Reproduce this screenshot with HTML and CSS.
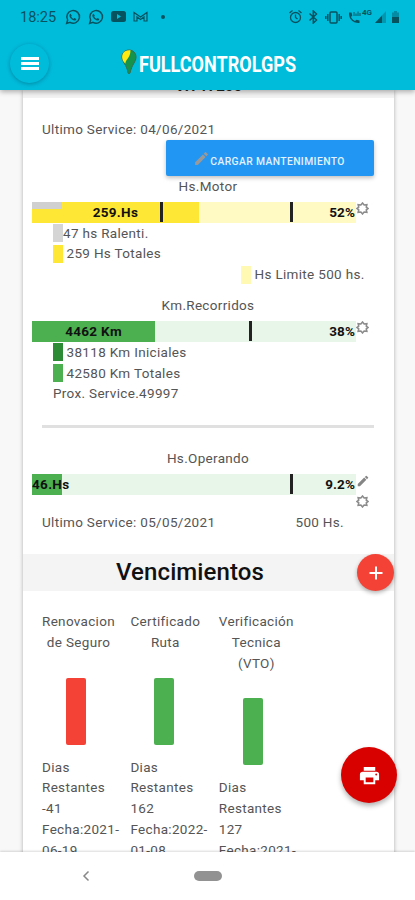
FILE: index.html
```html
<!DOCTYPE html>
<html lang="es">
<head>
  <meta charset="UTF-8">
  <meta name="viewport" content="width=device-width, initial-scale=1.0">
  <title>FULLCONTROLGPS</title>
  <link rel="stylesheet" href="styles.css">
</head>
<body>
  <!-- Shared icons -->
  <svg class="defs">
    <symbol id="gear" viewBox="0 0 24 24">
      <path d="M12 2l3 3.500 5-.5-1 4.500 3 2.500-3 2.500 1 4.500-5-.5-3 3.500-3-3.500-5 .5 1-4.500L2 12l3-2.500L4 5l5 .5z" fill="none" stroke="#8c8c8c" stroke-width="3"/>
      <circle cx="12" cy="12" r="3.500" fill="#fff"/>
    </symbol>
    <symbol id="pencil" viewBox="0 0 24 24">
      <path d="M3 17.250V21h3.750L17.810 9.940l-3.750-3.750zM20.710 7.040a1 1 0 0 0 0-1.410l-2.340-2.340a1 1 0 0 0-1.410 0l-1.830 1.830 3.750 3.750z"/>
    </symbol>
    <symbol id="whatsapp" viewBox="0 0 24 24">
      <path d="M2.500 21.500l1.500-5A9.500 9.500 0 1 1 7.500 20z" fill="none" stroke="currentColor" stroke-width="2.200"/>
      <path d="M8.500 7l1.700 3-1 1.300c1 1.800 2 2.700 3.800 3.500l1.200-1.300 2.800 1.500c-.5 2.500-2.500 2.700-4.500 1.800-3-1.300-5-3.500-5.800-6C6.300 9 7 7.500 8.500 7z" fill="currentColor"/>
    </symbol>
  </svg>

  <header class="header">
    <div class="status-bar">
      <div class="status-left">
        <span class="clock">18:25</span>
        <svg width="16" height="16"><use href="#whatsapp"/></svg>
        <svg width="16" height="16"><use href="#whatsapp"/></svg>
        <svg width="15" height="11" viewBox="0 0 15 11"><rect width="15" height="11" rx="2.500" fill="currentColor"/><path d="M6 3l4 2.500L6 8z" fill="#00bcdb"/></svg>
        <svg width="15" height="11" viewBox="0 0 15 11"><path d="M1 10V1.500L7.500 6 14 1.500V10h-3V6L7.500 8.500 4 6v4z" fill="none" stroke="currentColor" stroke-width="1.200"/></svg>
        <span class="dot"></span>
      </div>
      <div class="status-right">
        <svg width="13" height="14" viewBox="0 0 13 14" fill="none" stroke="currentColor" stroke-width="1.300"><circle cx="6.500" cy="7.500" r="5"/><path d="M6.500 4.500v3l2 1.500M.5 3l3-2.500M12.500 3l-3-2.500"/></svg>
        <svg class="bluetooth" width="9" height="14" viewBox="0 0 9 14" fill="none" stroke="currentColor" stroke-width="1.500"><path d="M.5 3.500l7 6.500-3.200 3V1l3.200 3-7 6.500"/></svg>
        <svg width="17" height="13" viewBox="0 0 17 13" fill="none" stroke="currentColor" stroke-width="1.500"><rect x="5" y="1" width="7" height="11" rx="1"/><path d="M2.800 3v7M14.200 3v7M.8 5v3M16.200 5v3"/></svg>
        <svg width="13" height="14" viewBox="0 0 13 14"><path d="M1 2.500h2.500l.8 3L3 7c.9 2 2.200 3.200 4 4l1.500-1.300 3 .8V13C5 13.500.5 9 1 2.500z" fill="currentColor"/><path d="M6 6V2M8 6V3.500M10 6V1.500M12 6V3" stroke="currentColor"/></svg>
        <span class="network">4G</span>
        <svg width="11" height="12" viewBox="0 0 11 12"><path d="M11 0v12H0z" fill="currentColor" opacity=".35"/><path d="M7 4.400V12H0z" fill="currentColor"/></svg>
        <svg class="battery" width="7" height="12" viewBox="0 0 7 12"><path d="M2 0h3v1.500h2V6H0V1.500h2z" fill="currentColor" opacity=".45"/><path d="M0 6h7v6H0z" fill="currentColor"/></svg>
      </div>
    </div>
    <div class="app-bar">
      <button class="menu-btn" aria-label="Menu"><span></span><span></span><span></span></button>
      <div class="brand">
        <svg width="16" height="25" viewBox="0 0 16 25"><path d="M8 1c4 0 7 3 7 7 0 5-4 7-6 16-.4 1-1.600 1-2 0C6 16 1 13 1 8c0-4 3-7 7-7z" fill="#16934b" stroke="#376d50"/><path d="M9.500 1.200C3 .5.500 5 1.300 9.500 1.800 12 3 13.500 4.500 14.500 4 11 9.500 9 9.500 1.200z" fill="#ffeb12"/></svg>
        <span class="brand-name">FULLCONTROLGPS</span>
      </div>
    </div>
  </header>

  <main class="content">
    <div class="card">
      <div class="vehicle">VH 17200</div>

      <!-- Hs.Motor -->
      <section class="service motor">
        <p class="line">Ultimo Service: 04/06/2021</p>
        <button class="load-btn"><svg width="17" height="17" fill="#999"><use href="#pencil"/></svg>CARGAR MANTENIMIENTO</button>
        <p class="metric">Hs.Motor</p>
        <div class="bar-row">
          <div class="bar yellow">
            <div class="fill" style="width: 51.5%">259.Hs</div>
            <span class="idle"></span>
            <span class="mark" style="left: 39.5%"></span>
            <span class="mark" style="left: 79.5%"></span>
            <span class="percent">52%</span>
          </div>
          <svg class="tool" width="13" height="13"><use href="#gear"/></svg>
        </div>
        <ul class="legend">
          <li class="tight"><i class="swatch gray"></i>47 hs Ralenti.</li>
          <li><i class="swatch yellow-dark"></i>259 Hs Totales</li>
          <li class="limit"><i class="swatch yellow-light"></i>Hs Limite 500 hs.</li>
        </ul>
      </section>

      <!-- Km.Recorridos -->
      <section class="service km">
        <p class="metric">Km.Recorridos</p>
        <div class="bar-row">
          <div class="bar green">
            <div class="fill" style="width: 38%">4462 Km</div>
            <span class="mark" style="left: 67%"></span>
            <span class="percent">38%</span>
          </div>
          <svg class="tool" width="13" height="13"><use href="#gear"/></svg>
        </div>
        <ul class="legend">
          <li><i class="swatch green-dark"></i>38118 Km Iniciales</li>
          <li><i class="swatch green-mid"></i>42580 Km Totales</li>
          <li>Prox. Service.49997</li>
        </ul>
      </section>

      <hr class="divider">

      <!-- Hs.Operando -->
      <section class="service operando">
        <p class="metric">Hs.Operando</p>
        <div class="bar-row">
          <div class="bar green">
            <div class="fill start" style="width: 9.2%">46.Hs</div>
            <span class="mark" style="left: 79.5%"></span>
            <span class="percent">9.2%</span>
          </div>
          <div class="tools">
            <svg width="14" height="14" fill="#858585"><use href="#pencil"/></svg>
            <svg width="13" height="13"><use href="#gear"/></svg>
          </div>
        </div>
        <p class="line split"><span>Ultimo Service: 05/05/2021</span><span>500 Hs.</span></p>
      </section>

      <!-- Vencimientos -->
      <div class="due-header">
        <h2>Vencimientos</h2>
        <button class="add-btn" aria-label="Agregar"><svg width="16" height="16" viewBox="0 0 16 16"><path d="M8 1.500v13M1.500 8h13" stroke="#fff" stroke-width="2"/></svg></button>
      </div>
      <div class="due-list">
        <div class="due">
          <h3>Renovacion<br>de Seguro</h3>
          <div class="due-bar expired"></div>
          <p>Dias<br>Restantes<br>-41<br>Fecha:2021-<br>06-19</p>
        </div>
        <div class="due">
          <h3>Certificado<br>Ruta</h3>
          <div class="due-bar"></div>
          <p>Dias<br>Restantes<br>162<br>Fecha:2022-<br>01-08</p>
        </div>
        <div class="due">
          <h3>Verificación<br>Tecnica<br>(VTO)</h3>
          <div class="due-bar"></div>
          <p>Dias<br>Restantes<br>127<br>Fecha:2021-</p>
        </div>
      </div>
    </div>
    <button class="print-btn" aria-label="Imprimir">
      <svg width="23" height="23" viewBox="0 0 24 24"><path d="M19 8H5a3 3 0 0 0-3 3v6h4v4h12v-4h4v-6a3 3 0 0 0-3-3zm-3 11H8v-5h8zm3-7a1 1 0 1 1 0-2 1 1 0 0 1 0 2zM18 3H6v4h12z" fill="#fff"/></svg>
    </button>
  </main>

  <nav class="nav-bar">
    <svg width="8" height="12" viewBox="0 0 8 12"><path d="M6.500 1.500L2 6l4.500 4.500" fill="none" stroke="#888" stroke-width="1.500"/></svg>
    <span class="home-pill"></span>
  </nav>
</body>
</html>
```
FILE: styles.css
```css
* {
  box-sizing: border-box;
}
body {
  margin: 0;
  height: 900px;
  display: flex;
  flex-direction: column;
  overflow: hidden;
  background-color: #f8f8f8;
  color: #555;
  font-family: Roboto, sans-serif;
  font-size: 13.5px;
  line-height: 20.8px;
  letter-spacing: 0.32px;
}
p, h2, h3, ul {
  margin: 0;
  padding: 0;
  font-weight: 400;
}
button {
  border: none;
  padding: 0;
  font-family: inherit;
  display: flex;
  align-items: center;
  justify-content: center;
}
svg {
  display: block;
  flex-shrink: 0;
}
.defs {
  display: none;
}

/* Header */
.header {
  height: 90px;
  flex-shrink: 0;
  background-color: #00bcdb;
  box-shadow: 0 2px 5px rgba(0, 0, 0, 0.3);
  z-index: 2;
}
.status-bar {
  height: 34px;
  padding: 0 16px 0 20px;
  display: flex;
  justify-content: space-between;
  align-items: center;
  color: #07525f;
}
.status-left, .status-right {
  display: flex;
  align-items: center;
}
.status-left {
  gap: 7px;
}
.clock {
  width: 38px;
  font-size: 14.5px;
  letter-spacing: 0;
  padding-top: 2px;
}
.dot {
  width: 4px;
  height: 4px;
  margin-left: 6px;
  border-radius: 50%;
  background-color: #07525f;
}
.status-right {
  gap: 6px;
}
.bluetooth {
  margin: 0 1px;
}
.network {
  margin: -7px -3px 0 -5px;
  font-size: 8px;
  font-weight: 700;
  letter-spacing: 0;
}
.app-bar {
  height: 56px;
  padding: 0 10px;
  display: flex;
  align-items: center;
}
.menu-btn {
  width: 39px;
  height: 39px;
  border-radius: 50%;
  flex-direction: column;
  gap: 2px;
  margin-top: 2px;
  background-color: #00bcdb;
  box-shadow: 0 1px 4px rgba(0, 60, 80, 0.4);
}
.menu-btn span {
  width: 18px;
  height: 3px;
  background-color: #fff;
}
.brand {
  display: flex;
  align-items: center;
  margin-left: 72px;
}
.brand-name {
  width: 158px;
  margin: 7px 0 0 2px;
  color: #fff;
  font-size: 21.5px;
  font-weight: 700;
  letter-spacing: 0;
  transform: scaleX(0.84);
  transform-origin: left;
}

/* Card */
.content {
  flex: 1;
  min-height: 0;
  overflow: hidden;
  position: relative;
}
.card {
  width: 371px;
  height: 800px;
  margin-left: 23px;
  background-color: #fff;
  box-shadow: 0 0 4px rgba(0, 0, 0, 0.3);
}
.vehicle {
  height: 8px;
  display: flex;
  justify-content: center;
  align-items: flex-end;
  background-color: #f3f3f3;
  color: #222;
  font-size: 15px;
  font-weight: 700;
  letter-spacing: 0;
  line-height: 19px;
  padding-bottom: 2px;
}
.service {
  padding: 0 20px 0 9px;
}
.motor {
  height: 197px;
  padding-top: 21px;
}
.line {
  padding-left: 10px;
}
.load-btn {
  width: 208px;
  height: 36px;
  margin-left: auto;
  padding: 2px 2px 0 0;
  border-radius: 2px;
  background-color: #2196f3;
  color: #e3f2ff;
  font-size: 10.3px;
  font-weight: 500;
  letter-spacing: 0.4px;
  box-shadow: 0 2px 4px rgba(0, 0, 0, 0.25);
}
.load-btn {
  padding-top: 7px;
}
.load-btn svg {
  margin-top: -5px;
}
.metric {
  padding-left: 10px;
  text-align: center;
}
.bar-row {
  display: flex;
  margin-top: 5px;
}
.bar {
  width: 324px;
  height: 21px;
  position: relative;
  display: flex;
  align-items: center;
  flex-shrink: 0;
  color: #111;
  font-weight: 700;
  line-height: 21px;
}
.yellow {
  background-color: #fff9c4;
}
.green {
  background-color: #e8f5e9;
}
.fill {
  height: 21px;
  text-align: center;
  white-space: nowrap;
}
.fill.start {
  text-align: left;
}
.yellow .fill {
  background-color: #ffe735;
}
.green .fill {
  background-color: #4caf50;
}
.idle {
  position: absolute;
  left: 0;
  top: 0;
  width: 30px;
  height: 7px;
  background-color: #d0d0d0;
}
.mark {
  position: absolute;
  top: 0;
  width: 3px;
  height: 20px;
  background-color: #222;
}
.percent {
  margin-left: auto;
  margin-right: 1px;
  font-size: 13.5px;
  letter-spacing: 0.1px;
}
.legend {
  padding-left: 21px;
  list-style: none;
}
.legend li {
  display: flex;
  align-items: center;
  gap: 3.5px;
}
.legend .tight {
  gap: 0;
}
.legend .limit {
  margin-left: 188px;
}
.swatch {
  width: 10px;
  height: 18px;
}
.gray {
  background-color: #d5d5d5;
}
.yellow-dark {
  background-color: #ffe735;
}
.yellow-light {
  background-color: #fff9b4;
}
.green-dark {
  background-color: #2e8b35;
}
.green-mid {
  background-color: #4caf50;
}
.km {
  height: 130px;
}
.divider {
  height: 3px;
  margin: 0 20px 0 19px;
  border: none;
  background-color: #e0e0e0;
}
.operando {
  height: 126px;
  padding-top: 20px;
}
.tools {
  display: flex;
  flex-direction: column;
  gap: 7px;
}
.split {
  display: flex;
  justify-content: space-between;
  padding-right: 30px;
  margin-top: 4px;
}

/* Vencimientos */
.due-header {
  height: 37px;
  display: flex;
  align-items: center;
  justify-content: flex-end;
  background-color: #f4f4f4;
}
.due-header h2 {
  margin-right: 93px;
  color: #111;
  font-size: 24px;
  font-weight: 500;
  letter-spacing: 0.1px;
}
.add-btn {
  width: 37px;
  height: 37px;
  border-radius: 50%;
  background-color: #f44336;
  box-shadow: 0 2px 4px rgba(0, 0, 0, 0.3);
}
.due-list {
  display: flex;
  align-items: flex-start;
  gap: 20.4px;
  padding: 20px 0 0 19px;
}
.due {
  width: 68px;
  display: flex;
  flex-direction: column;
  white-space: nowrap;
}
.due h3 {
  font-size: inherit;
  align-self: flex-start;
  text-align: center;
  min-width: 68px;
}
.due-bar {
  width: 20px;
  height: 67px;
  margin: 25px auto 12px;
  border-radius: 2px;
  background-color: #4caf50;
}
.expired {
  background-color: #f44336;
}
.print-btn {
  position: absolute;
  right: 18px;
  bottom: 49px;
  width: 56px;
  height: 56px;
  border-radius: 50%;
  background-color: #d90000;
  box-shadow: 0 3px 5px rgba(0, 0, 0, 0.3);
}

/* System navigation */
.nav-bar {
  height: 48px;
  flex-shrink: 0;
  display: flex;
  align-items: center;
  gap: 104px;
  padding-left: 82px;
  background-color: #fff;
  box-shadow: 0 -1px 2px rgba(0, 0, 0, 0.15);
  z-index: 2;
}
.home-pill {
  width: 28px;
  height: 10px;
  border-radius: 5px;
  background-color: #929292;
}
```
